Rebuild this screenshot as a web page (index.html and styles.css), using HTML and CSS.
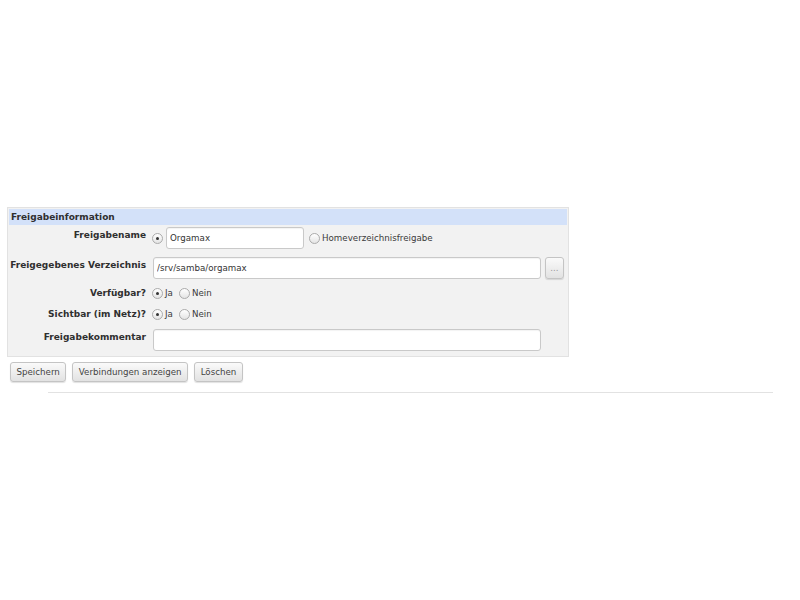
FILE: index.html
```html
<!DOCTYPE html>
<html lang="de">
<head>
    <meta charset="UTF-8">
    <title>Freigabe bearbeiten</title>
    <link rel="stylesheet" href="styles.css">
</head>
<body>
    <div class="page">
        <form class="share-form">
            <div class="section">
                <div class="section-title">Freigabeinformation</div>
                <div class="fields">
                    <label class="field-label">Freigabename</label>
                    <div class="field-value">
                        <input type="radio" name="mode" checked>
                        <input type="text" class="text-input short" value="Orgamax">
                        <input type="radio" name="mode" class="radio-spaced">
                        <span>Homeverzeichnisfreigabe</span>
                    </div>

                    <label class="field-label">Freigegebenes Verzeichnis</label>
                    <div class="field-value">
                        <input type="text" class="text-input long" value="/srv/samba/orgamax">
                        <button type="button" class="btn chooser">...</button>
                    </div>

                    <label class="field-label small">Verfügbar?</label>
                    <div class="field-value radios">
                        <input type="radio" name="avail" checked><span>Ja</span>
                        <input type="radio" name="avail"><span>Nein</span>
                    </div>

                    <label class="field-label small">Sichtbar (im Netz)?</label>
                    <div class="field-value radios">
                        <input type="radio" name="browse" checked><span>Ja</span>
                        <input type="radio" name="browse"><span>Nein</span>
                    </div>

                    <label class="field-label">Freigabekommentar</label>
                    <div class="field-value">
                        <input type="text" class="text-input long" value="">
                    </div>
                </div>
            </div>

            <div class="actions">
                <button type="button" class="btn">Speichern</button>
                <button type="button" class="btn">Verbindungen anzeigen</button>
                <button type="button" class="btn">Löschen</button>
            </div>
        </form>
        <hr class="divider">
    </div>
</body>
</html>
```

FILE: styles.css
```css
* {
    box-sizing: border-box;
}

body {
    margin: 0;
    font-family: "DejaVu Sans", Verdana, sans-serif;
    font-size: 8.7px;
    color: #3a3a3a;
    background: #fff;
}

.page {
    padding-top: 207px;
    padding-left: 7px;
}

.section {
    width: 562px;
    border: 1px solid #e2e2e2;
    background-color: #f2f2f2;
    padding: 1px 1px 5px 1px;
}

.section-title {
    background-color: #d3e1f9;
    font-weight: bold;
    font-size: 9px;
    height: 16px;
    line-height: 16px;
    padding-left: 2px;
    color: #2f2f2f;
}

.fields {
    display: grid;
    grid-template-columns: 137px 1fr;
    column-gap: 6px;
    row-gap: 8px;
    padding-top: 2px;
}

.field-label {
    font-weight: bold;
    font-size: 9px;
    text-align: right;
    line-height: 11px;
    padding-top: 3px;
    white-space: nowrap;
    color: #2f2f2f;
}

.field-label.small {
    padding-top: 1px;
}

.field-value {
    display: flex;
    align-items: center;
    min-height: 13px;
}

.field-value span {
    line-height: 11px;
}

input[type="radio"] {
    appearance: none;
    -webkit-appearance: none;
    width: 11px;
    height: 11px;
    margin: 0 2px 0 0;
    border: 1px solid #ababab;
    border-radius: 50%;
    background: linear-gradient(#ffffff, #e4e4e4);
    position: relative;
    flex: none;
}

input[type="radio"]:checked::after {
    content: "";
    position: absolute;
    left: 3px;
    top: 3px;
    width: 3px;
    height: 3px;
    border-radius: 50%;
    background: #333;
}

.radio-spaced {
    margin-left: 5px !important;
}

.radios span {
    margin-right: 3px;
}

.radios span:first-of-type {
    margin-right: 6px;
}

.text-input {
    height: 22px;
    border: 1px solid #c9c9c9;
    border-radius: 3px;
    background: #fff;
    box-shadow: inset 0 1px 1px rgba(0,0,0,0.05);
    font-family: inherit;
    font-size: 8.7px;
    color: #333;
    padding: 0 3px;
    margin: 0;
}

.text-input.short {
    width: 138px;
    margin-left: 1px;
}

.text-input.long {
    width: 388px;
    margin-left: 1px;
}

.btn {
    height: 20px;
    padding: 0 5.5px;
    border: 1px solid #c4c4c4;
    border-radius: 3px;
    background: linear-gradient(#fafafa, #e2e2e2);
    font-family: inherit;
    font-size: 8.7px;
    color: #444;
    box-shadow: 0 1px 1px rgba(0,0,0,0.12);
    margin: 0;
}

.btn.chooser {
    width: 19px;
    height: 22px;
    padding: 0;
    margin-left: 4px;
    color: #999;
}

.actions {
    display: flex;
    gap: 6px;
    margin-top: 5px;
    margin-left: 3px;
}

.divider {
    width: 725px;
    margin: 10px 0 0 41px;
    border: 0;
    border-top: 1px solid #e2e2e2;
}
```
